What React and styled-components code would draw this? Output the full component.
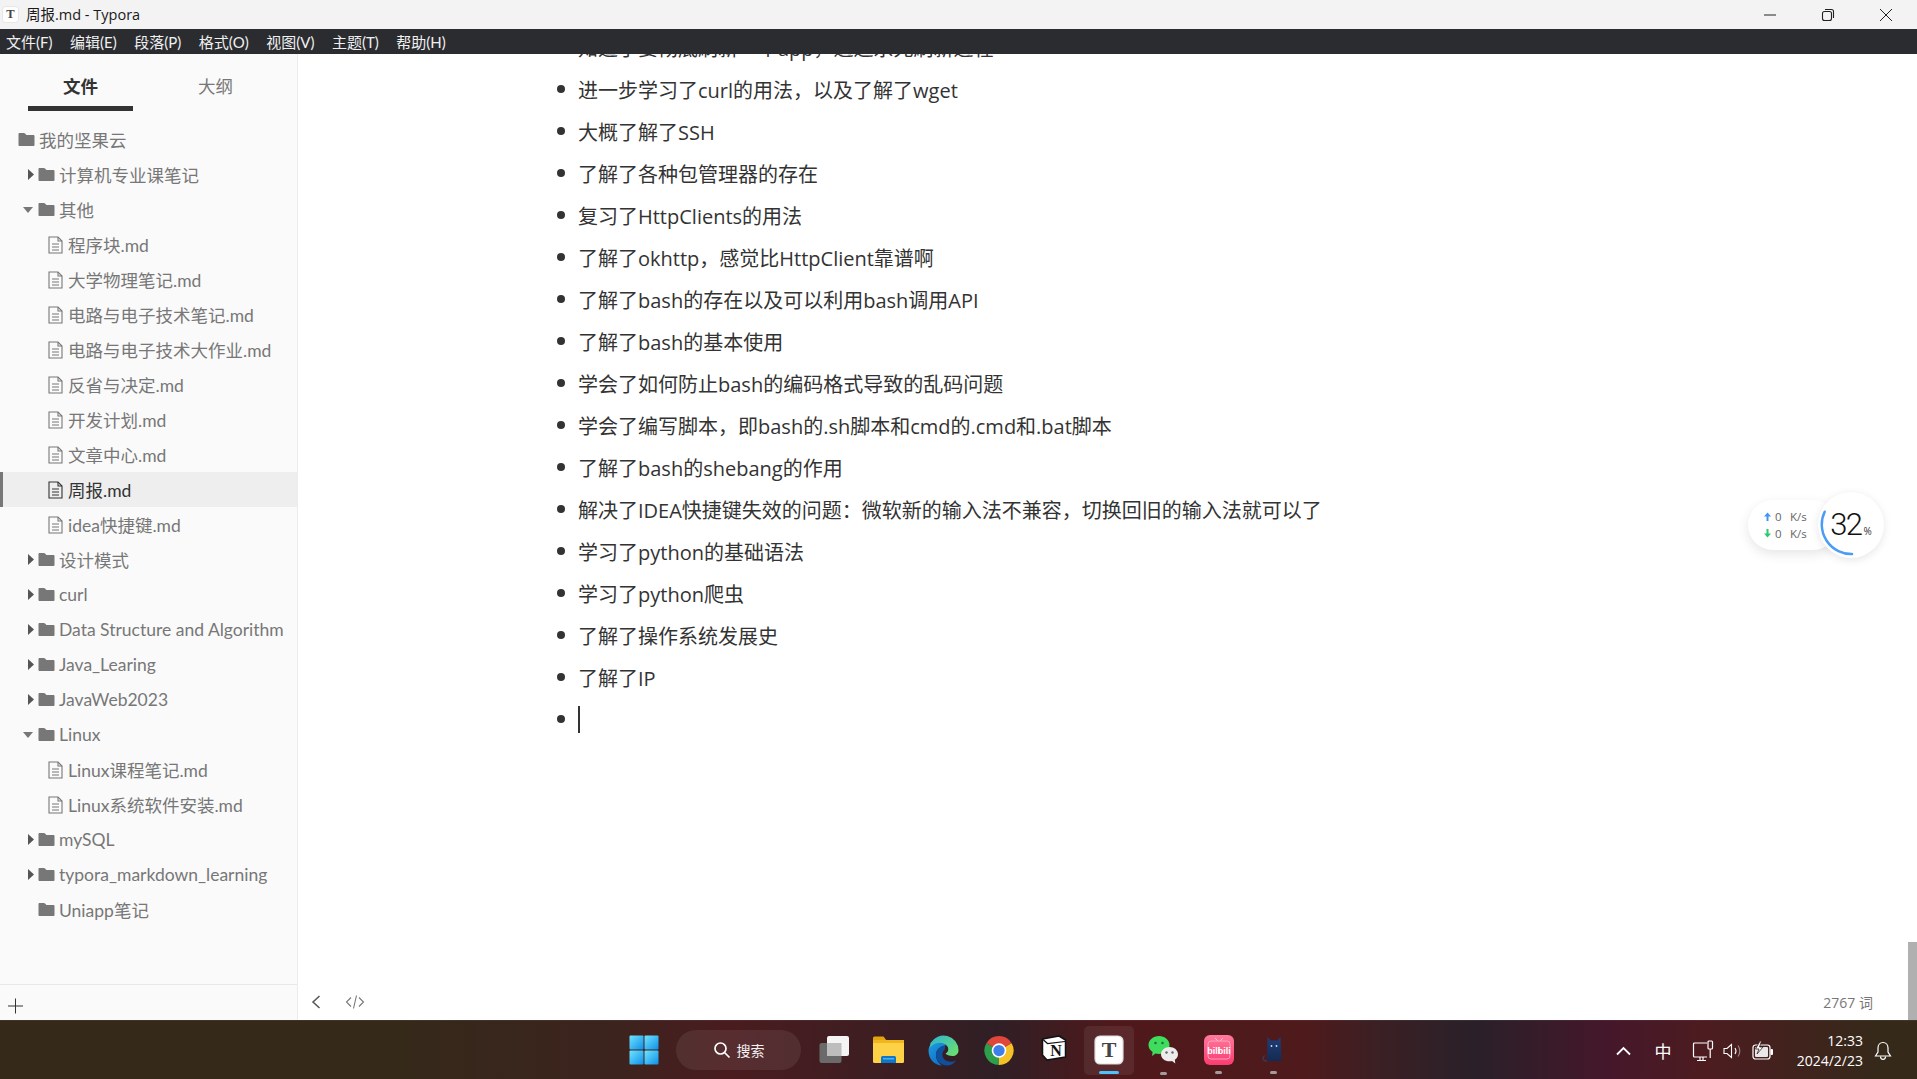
import React from 'react';
import styled, { createGlobalStyle } from 'styled-components';

const FONT = '"Open Sans", "Noto Sans CJK SC", sans-serif';
const UI_FONT = 'Lato, "Noto Sans CJK SC", sans-serif';

const GlobalStyle = createGlobalStyle`
  html, body {
    margin: 0;
    padding: 0;
    height: 100%;
    overflow: hidden;
    font-family: ${FONT};
  }
  * {
    box-sizing: border-box;
  }
`;

const Window = styled.div`
  display: flex;
  flex-direction: column;
  width: 1917px;
  height: 1079px;
  background-color: #fff;
`;

const TitleBar = styled.header`
  display: flex;
  align-items: center;
  flex: 0 0 29px;
  padding: 0 2px;
  background-color: #f3f3f3;
`;

const TitleText = styled.span`
  flex: 1;
  margin: 0 0 2px 7px;
  font-size: 14.5px;
  color: #1a1a1a;
`;

const WindowButton = styled.button`
  display: flex;
  align-items: center;
  justify-content: center;
  width: 58px;
  height: 29px;
  padding: 0;
  border: 0;
  background: transparent;
`;

const MenuBar = styled.nav`
  display: flex;
  align-items: center;
  flex: 0 0 25px;
  gap: 17.5px;
  padding-left: 6px;
  background-color: #2b2c30;
`;

const MenuItem = styled.span`
  font-family: ${UI_FONT};
  font-size: 15px;
  color: #f0f0f0;
`;

const Body = styled.div`
  display: flex;
  flex: 1;
  min-height: 0;
`;

const Sidebar = styled.aside`
  display: flex;
  flex-direction: column;
  flex: 0 0 298px;
  width: 298px;
  min-width: 0;
  overflow: hidden;
  background-color: #fafafa;
  border-right: 1px solid #ececec;
`;

const Tabs = styled.div`
  display: flex;
  flex: 0 0 68px;
  padding: 14px 0 0 28px;
  gap: 30px;
`;

const Tab = styled.div`
  width: 105px;
  height: 43px;
  padding-top: 4px;
  text-align: center;
  font-size: 17.5px;
  line-height: 28px;
  font-weight: ${(p) => (p.$active ? 700 : 400)};
  color: ${(p) => (p.$active ? '#333' : '#777')};
  border-bottom: 5px solid ${(p) => (p.$active ? '#333' : 'transparent')};
`;

const Tree = styled.div`
  flex: 1;
  overflow: hidden;
`;

const Row = styled.div`
  display: flex;
  align-items: center;
  height: 35px;
  padding-left: ${(p) => p.$pad}px;
  font-family: ${UI_FONT};
  font-size: 17.5px;
  white-space: nowrap;
  color: ${(p) => (p.$active ? '#333' : '#777')};
  background-color: ${(p) => (p.$active ? '#eeeeee' : 'transparent')};
  box-shadow: ${(p) => (p.$active ? 'inset 3px 0 0 #777' : 'none')};
`;

const ArrowSlot = styled.span`
  display: flex;
  justify-content: flex-end;
  width: 20px;
  padding-right: 4px;
`;

const RowLabel = styled.span`
  margin-left: ${(p) => p.$gap}px;
`;

const SidebarFooter = styled.div`
  display: flex;
  align-items: center;
  flex: 0 0 36px;
  padding: 6px 0 0 8px;
  border-top: 1px solid #e8e8e8;
`;

const Editor = styled.main`
  position: relative;
  display: flex;
  flex-direction: column;
  flex: 1;
  min-width: 0;
`;

const DocScroll = styled.div`
  flex: 1;
  min-height: 0;
  overflow: hidden;
`;

const List = styled.ul`
  margin: -28px 0 0;
  padding: 0 0 0 259px;
  list-style: none;
`;

const Item = styled.li`
  display: flex;
  align-items: center;
  height: 42px;
  font-size: 20px;
  color: #333;
  white-space: nowrap;

  &:before {
    content: '';
    flex: 0 0 8px;
    height: 8px;
    margin-right: 13px;
    border-radius: 50%;
    background-color: #333;
  }
`;

const Caret = styled.span`
  width: 1.5px;
  height: 27px;
  background-color: #333;
`;

const StatusBar = styled.footer`
  display: flex;
  align-items: center;
  flex: 0 0 36px;
  padding: 0 44px 0 13px;
`;

const StatusButton = styled.span`
  display: flex;
  margin-right: ${(p) => p.$gap}px;
`;

const WordCount = styled.span`
  margin-left: auto;
  font-size: 14px;
  color: #777;
`;

const ScrollThumb = styled.div`
  position: absolute;
  right: 0;
  bottom: 0;
  width: 9px;
  height: 78px;
  background-color: #b0b0b0;
`;

const SpeedWidget = styled.div`
  position: absolute;
  top: 438px;
  left: 1450px;
  display: flex;
  align-items: center;
`;

const SpeedPill = styled.div`
  display: flex;
  flex-direction: column;
  justify-content: center;
  gap: 3px;
  width: 90px;
  height: 50px;
  padding-left: 16px;
  border-radius: 25px;
  background-color: #fff;
  box-shadow: 0 4px 12px rgba(0, 0, 0, 0.1);
`;

const SpeedLine = styled.div`
  display: flex;
  align-items: center;
  height: 14px;
  font-size: 11.5px;
  color: #666;
`;

const SpeedValue = styled.span`
  width: 15px;
  margin-left: 4px;
`;

const UsageCircle = styled.div`
  position: relative;
  display: flex;
  align-items: center;
  justify-content: center;
  width: 66px;
  height: 66px;
  margin-left: -20px;
  border-radius: 50%;
  background-color: #fff;
  box-shadow: 0 2px 8px rgba(0, 0, 0, 0.1);
`;

const UsageArc = styled.svg`
  position: absolute;
  top: 0;
  left: 0;
`;

const UsageValue = styled.span`
  margin-bottom: 2px;
  font-family: Roboto, sans-serif;
  font-size: 31px;
  font-weight: 300;
  letter-spacing: -1.5px;
  color: #111;
`;

const UsageUnit = styled.span`
  align-self: flex-end;
  margin: 0 0 20px 2px;
  font-size: 10px;
  color: #333;
`;

const Taskbar = styled.div`
  display: grid;
  grid-template-columns: 1fr auto 1fr;
  flex: 0 0 59px;
  padding-top: 5px;
  border-top: 1px solid rgba(255, 255, 255, 0.06);
  background: linear-gradient(
    90deg,
    #35291a 0%,
    #35291a 21%,
    #3c231e 32%,
    #4a1c1f 38%,
    #3b1e22 47%,
    #2f1f25 52%,
    #4f191c 58%,
    #4f1a1c 68%,
    #3a2024 72%,
    #2a2029 77%,
    #45172a 84%,
    #4d1c20 89%,
    #35291a 98%
  );
`;

const TaskGroup = styled.div`
  grid-column: 2;
  display: flex;
`;

const TaskSlot = styled.div`
  display: flex;
  flex-direction: column;
  align-items: center;
  width: ${(p) => (p.$active ? '50px' : '55px')};
  height: 49px;
  margin: ${(p) => (p.$active ? '0 2px 0 3px' : '0')};
  padding-top: 9px;
  border-radius: 5px;
  background-color: ${(p) => (p.$active ? 'rgba(255, 255, 255, 0.07)' : 'transparent')};
`;

const TaskMark = styled.span`
  height: 3px;
  margin-top: 6px;
  border-radius: 2px;
  width: ${(p) => (p.$kind === 'active' ? '20px' : '7px')};
  background-color: ${(p) =>
    p.$kind === 'active' ? '#4cc2ff' : p.$kind === 'open' ? '#a89a9a' : 'transparent'};
`;

const SearchPill = styled.div`
  display: flex;
  align-items: center;
  justify-content: center;
  gap: 6px;
  width: 125px;
  height: 40px;
  margin: 4px 5px 0;
  border-radius: 20px;
  font-size: 14px;
  color: #f2f2f2;
  background-color: rgba(255, 255, 255, 0.08);
`;

const Tray = styled.div`
  grid-column: 3;
  justify-self: end;
  display: flex;
  align-items: center;
  height: 49px;
  padding-right: 24px;
  color: #fff;
`;

const TraySlot = styled.span`
  display: flex;
  align-items: center;
  justify-content: center;
  width: ${(p) => p.$w}px;
  font-size: ${(p) => (p.$text ? '17px' : 'inherit')};
`;

const Clock = styled.div`
  width: 70px;
  margin: 0 10px;
  text-align: right;
  font-size: 14px;
  line-height: 20px;
`;

const TyporaIcon = ({ size }) => (
  <svg width={size} height={size} viewBox="0 0 30 30">
    <rect x="1" y="1" width="28" height="28" rx="5" fill="#fff" stroke="#ddd" strokeWidth="1.200" />
    <text x="15" y="22" textAnchor="middle" fontFamily="Liberation Serif, serif" fontWeight="700" fontSize="22" fill="#444">T</text>
  </svg>
);

const MinimizeIcon = () => (
  <svg width="14" height="14" viewBox="0 0 14 14"><path d="M1 7h12" stroke="#222" strokeWidth="1" /></svg>
);

const RestoreIcon = () => (
  <svg width="14" height="14" viewBox="0 0 14 14" fill="none" stroke="#222" strokeWidth="1.100">
    <rect x="1.500" y="3.500" width="9" height="9" rx="2" />
    <path d="M4 1.500h6.500a2 2 0 0 1 2 2V10" />
  </svg>
);

const CloseIcon = () => (
  <svg width="14" height="14" viewBox="0 0 14 14"><path d="M1 1l12 12M13 1L1 13" stroke="#222" strokeWidth="1" /></svg>
);

const FolderIcon = () => (
  <svg width="17" height="15" viewBox="0 0 17 15">
    <path d="M1.500 1h4.200c.6 0 1 .2 1.400.6L8.400 3h7c.6 0 1.100.5 1.100 1.100v8.800c0 .6-.5 1.100-1.100 1.100H1.600C1 14 .5 13.500.5 12.900V2C.5 1.400 1 1 1.500 1z" fill="#777" />
  </svg>
);

const FileIcon = () => (
  <svg width="15" height="18" viewBox="0 0 15 18" fill="none" stroke="currentColor" strokeWidth="1.100">
    <path d="M1 1h9l4 4v12H1z" />
    <path d="M10 1v4h4M4 8h7M4 11h7M4 14h7" />
  </svg>
);

const Arrow = ({ open }) =>
  open ? (
    <svg width="11" height="6" viewBox="0 0 11 6"><path d="M0 0h10L5 6z" fill="#777" /></svg>
  ) : (
    <svg width="6" height="11" viewBox="0 0 6 11"><path d="M0 0l6 5.500L0 11z" fill="#555" /></svg>
  );

const PlusIcon = () => (
  <svg width="16" height="16" viewBox="0 0 16 16"><path d="M0 8h15M7.500 .5v15" stroke="#333" strokeWidth="1" /></svg>
);

const BackIcon = () => (
  <svg width="10" height="16" viewBox="0 0 10 16" fill="none"><path d="M8.500 2L2 8l6.500 6" stroke="#555" strokeWidth="1.500" /></svg>
);

const CodeIcon = () => (
  <svg width="20" height="14" viewBox="0 0 20 14" fill="none" stroke="#777" strokeWidth="1.100">
    <path d="M6 2.500L1.500 7 6 11.500M14 2.500L18.500 7 14 11.500M11.500 .5L8.500 13.500" />
  </svg>
);

const ArrowUp = ({ color }) => (
  <svg width="7" height="9" viewBox="0 0 7 9"><path d="M3.500 .5L7 4.500H4.500V9h-2V4.500H0z" fill={color} /></svg>
);

const ArrowDown = ({ color }) => (
  <svg width="7" height="9" viewBox="0 0 7 9"><path d="M3.500 8.500L7 4.500H4.500V0h-2v4.500H0z" fill={color} /></svg>
);

const WindowsLogo = () => (
  <svg width="30" height="30" viewBox="0 0 30 30">
    <defs>
      <linearGradient id="winBlue" x1="0" y1="0" x2="1" y2="1">
        <stop offset="0" stopColor="#6fe4ff" />
        <stop offset="1" stopColor="#0f8fe8" />
      </linearGradient>
    </defs>
    <rect x="0.500" y="0.500" width="14" height="14" rx="1" fill="url(#winBlue)" />
    <rect x="15.500" y="0.500" width="14" height="14" rx="1" fill="url(#winBlue)" />
    <rect x="0.500" y="15.500" width="14" height="14" rx="1" fill="url(#winBlue)" />
    <rect x="15.500" y="15.500" width="14" height="14" rx="1" fill="url(#winBlue)" />
  </svg>
);

const SearchIcon = () => (
  <svg width="18" height="18" viewBox="0 0 18 18" fill="none" stroke="#fff" strokeWidth="1.700">
    <circle cx="7.500" cy="7.500" r="5.500" />
    <path d="M11.500 11.500L16.500 16.500" />
  </svg>
);

const TaskViewIcon = () => (
  <svg width="30" height="30" viewBox="0 0 30 30">
    <rect x="0.500" y="8" width="22" height="20" rx="2" fill="#6a6a6a" />
    <rect x="8" y="1" width="22" height="20" rx="2" fill="#f4f4f4" />
    <rect x="8" y="8" width="14.500" height="13" fill="#bdbdbd" />
  </svg>
);

const ExplorerIcon = () => (
  <svg width="31" height="30" viewBox="0 0 31 30">
    <path d="M0 3a1.500 1.500 0 0 1 1.500-1.500h9l3 4H0z" fill="#e2a40e" />
    <rect x="0" y="5" width="31" height="23" rx="1.500" fill="#fdd247" />
    <rect x="0" y="5" width="31" height="3" fill="#f1b51f" />
    <path d="M8 28v-5.500A1.500 1.500 0 0 1 9.500 21h12a1.500 1.500 0 0 1 1.500 1.500V28z" fill="#0f77c8" />
    <rect x="10" y="23" width="11" height="1.500" fill="#52b0ea" />
  </svg>
);

const EdgeIcon = () => (
  <svg width="31" height="31" viewBox="0 0 31 31">
    <defs>
      <linearGradient id="edgeBlue" x1="0" y1="0" x2="0.600" y2="1">
        <stop offset="0" stopColor="#1fa0e0" />
        <stop offset="1" stopColor="#1070c8" />
      </linearGradient>
      <linearGradient id="edgeGreen" x1="0" y1="0" x2="1" y2="0.800">
        <stop offset="0" stopColor="#2bb0d8" />
        <stop offset="1" stopColor="#6be070" />
      </linearGradient>
    </defs>
    <path d="M15.500 5C8 5 .5 9 .5 15.500.5 24 6.500 30.500 14 30.500c-3-2-6-5.500-6-10.500 0-5 3.500-8.500 9.500-9.500z" fill="url(#edgeBlue)" />
    <path d="M2.500 8A15 15 0 0 1 30.500 15.500c0 3.500-2.800 5.500-6 5.500-3.300 0-6-1-7-2.500 2.800-1.500 3.500-4.500 2-7C17.500 8 11.500 6.800 7.500 8.500 5.500 9.300 3.500 11 1.500 13z" fill="url(#edgeGreen)" />
    <path d="M17.500 10.500C12 10.500 8 15 8 20c0 6 5.500 10.500 11 10.500 3.800 0 7-2 9-5-4 2-9.500 1.500-12-1.500-2.500-3-2-7 .5-9z" fill="#0e4f9e" />
  </svg>
);

const ChromeIcon = () => (
  <svg width="32" height="32" viewBox="0 0 32 32">
    <path d="M16 16L3 8.500A15 15 0 0 1 29 8.500z" fill="#e0463a" />
    <path d="M16 16L29 8.500A15 15 0 0 1 16 31z" fill="#f6c126" />
    <path d="M16 16L16 31A15 15 0 0 1 3 8.500z" fill="#2f9e4a" />
    <circle cx="16" cy="16" r="7.500" fill="#fff" />
    <circle cx="16" cy="16" r="5.800" fill="#3f7fe8" />
  </svg>
);

const NotionIcon = () => (
  <svg width="26" height="26" viewBox="0 0 26 26">
    <path d="M1.500 4L18 1l6.500 4v17L6 25l-4.500-5z" fill="#fff" stroke="#111" strokeWidth="1.500" strokeLinejoin="round" />
    <path d="M2 4.500l4.500 4L24 6.500" fill="none" stroke="#111" strokeWidth="1.200" />
    <text x="15" y="21" textAnchor="middle" fontFamily="Liberation Serif, serif" fontWeight="700" fontSize="16" fill="#111">N</text>
  </svg>
);

const WechatIcon = () => (
  <svg width="31" height="31" viewBox="0 0 31 31">
    <path d="M11 1c5.800 0 10.500 4 10.500 9s-4.700 9-10.500 9c-1.300 0-2.500-.2-3.600-.5L4 21l.6-4C2 15.300.5 12.800.5 10 .5 5 5.200 1 11 1z" fill="#3fdc5e" />
    <circle cx="7.500" cy="8" r="1.300" fill="#1a7a34" />
    <circle cx="14.500" cy="8" r="1.300" fill="#1a7a34" />
    <path d="M21.500 12c4.700 0 8.500 3.200 8.500 7.200 0 2.300-1.300 4.300-3.200 5.600l.5 3.700-3.300-2.500c-.8.200-1.600.3-2.500.3-4.700 0-8.500-3.200-8.500-7.100S16.800 12 21.500 12z" fill="#ececec" />
    <circle cx="18.500" cy="17.500" r="1.200" fill="#666" />
    <circle cx="24.500" cy="17.500" r="1.200" fill="#666" />
  </svg>
);

const BilibiliIcon = () => (
  <svg width="30" height="30" viewBox="0 0 30 30">
    <defs>
      <linearGradient id="biliPink" x1="0" y1="0" x2="0" y2="1">
        <stop offset="0" stopColor="#ff7a9c" />
        <stop offset="1" stopColor="#fb3b72" />
      </linearGradient>
    </defs>
    <rect width="30" height="30" rx="6" fill="url(#biliPink)" />
    <path d="M11 3l3 3M19 3l-3 3" stroke="#ffc2d2" strokeWidth="1" />
    <rect x="4" y="6" width="22" height="18" rx="3" fill="none" stroke="#ffa3bb" strokeWidth="1" />
    <text x="9.800" y="19" textAnchor="middle" fontFamily="Liberation Sans, sans-serif" fontWeight="700" fontSize="9" fill="#fff">bili</text>
    <text x="20.300" y="19" textAnchor="middle" fontFamily="Liberation Sans, sans-serif" fontWeight="700" fontSize="9" fill="#fff">bili</text>
  </svg>
);

const CatIcon = () => (
  <svg width="30" height="30" viewBox="0 0 30 30">
    <defs>
      <linearGradient id="catNavy" x1="0" y1="0" x2="0" y2="1">
        <stop offset="0" stopColor="#1f3f78" />
        <stop offset="1" stopColor="#142a52" />
      </linearGradient>
    </defs>
    <path d="M8.500 2l3 3.500h7L21.500 2l1 24H8z" fill="url(#catNavy)" />
    <path d="M8 26c-2 0-4 -.5-4-2.500 0-1.500 1-2 1.500-3" fill="none" stroke="#3a3f55" strokeWidth="1.200" />
    <circle cx="12.500" cy="11" r=".9" fill="#cfe0ff" />
    <circle cx="17.500" cy="11" r=".9" fill="#cfe0ff" />
  </svg>
);

const ChevronUpIcon = () => (
  <svg width="15" height="10" viewBox="0 0 15 10" fill="none"><path d="M1 8.500L7.500 2 14 8.500" stroke="#fff" strokeWidth="1.800" /></svg>
);

const MonitorIcon = () => (
  <svg width="22" height="22" viewBox="0 0 22 22" fill="none" stroke="#fff" strokeWidth="1.200">
    <path d="M15 3H2.500a1 1 0 0 0-1 1v12a1 1 0 0 0 1 1H15" />
    <path d="M8 17v3M5 20.500h9M11 17v3" />
    <rect x="16" y="1" width="4.500" height="8" rx="1" />
    <path d="M18.200 9v9" />
  </svg>
);

const VolumeIcon = () => (
  <svg width="20" height="18" viewBox="0 0 20 18" fill="none" stroke="#fff" strokeWidth="1.100">
    <path d="M1 6.500h3L8.500 2.500v13L4 11.500H1z" />
    <path d="M12 6c1.200 1.800 1.200 4.200 0 6" />
    <path d="M15 3.500c2.200 3.300 2.200 7.700 0 11" stroke="#9a8a8a" />
  </svg>
);

const BatteryIcon = () => (
  <svg width="22" height="20" viewBox="0 0 22 20">
    <rect x="1" y="4" width="17" height="14" rx="2.500" fill="none" stroke="#fff" strokeWidth="1.200" />
    <rect x="3" y="6" width="13" height="10" rx="1" fill="#e8e8e8" />
    <rect x="18.500" y="8" width="2.500" height="6" rx="1" fill="#fff" />
    <path d="M8 0L3.500 8h3.500L5 13l6-7H7.500L9.500 0z" fill="#fff" stroke="#3a2222" strokeWidth="0.800" />
  </svg>
);

const BellIcon = () => (
  <svg width="18" height="20" viewBox="0 0 18 20" fill="none" stroke="#fff" strokeWidth="1.200">
    <path d="M9 1.500c-3 0-5 2.300-5 5.500v4L1.500 15h15L14 11V7c0-3.200-2-5.500-5-5.500z" />
    <path d="M6.500 15.500c0 1.800 1 2.800 2.500 2.800s2.500-1 2.500-2.800" />
  </svg>
);

const menuItems = ['文件(F)', '编辑(E)', '段落(P)', '格式(O)', '视图(V)', '主题(T)', '帮助(H)'];

const treeRows = [
  { type: 'root', name: '我的坚果云' },
  { type: 'folder', name: '计算机专业课笔记' },
  { type: 'folder', name: '其他', open: true },
  { type: 'file', name: '程序块.md' },
  { type: 'file', name: '大学物理笔记.md' },
  { type: 'file', name: '电路与电子技术笔记.md' },
  { type: 'file', name: '电路与电子技术大作业.md' },
  { type: 'file', name: '反省与决定.md' },
  { type: 'file', name: '开发计划.md' },
  { type: 'file', name: '文章中心.md' },
  { type: 'file', name: '周报.md', active: true },
  { type: 'file', name: 'idea快捷键.md' },
  { type: 'folder', name: '设计模式' },
  { type: 'folder', name: 'curl' },
  { type: 'folder', name: 'Data Structure and Algorithm' },
  { type: 'folder', name: 'Java_Learing' },
  { type: 'folder', name: 'JavaWeb2023' },
  { type: 'folder', name: 'Linux', open: true },
  { type: 'file', name: 'Linux课程笔记.md' },
  { type: 'file', name: 'Linux系统软件安装.md' },
  { type: 'folder', name: 'mySQL' },
  { type: 'folder', name: 'typora_markdown_learning' },
  { type: 'folder', name: 'Uniapp笔记', leaf: true },
];

const notes = [
  '知道了要彻底刷新一个app，通过杀死刷新进程',
  '进一步学习了curl的用法，以及了解了wget',
  '大概了解了SSH',
  '了解了各种包管理器的存在',
  '复习了HttpClients的用法',
  '了解了okhttp，感觉比HttpClient靠谱啊',
  '了解了bash的存在以及可以利用bash调用API',
  '了解了bash的基本使用',
  '学会了如何防止bash的编码格式导致的乱码问题',
  '学会了编写脚本，即bash的.sh脚本和cmd的.cmd和.bat脚本',
  '了解了bash的shebang的作用',
  '解决了IDEA快捷键失效的问题：微软新的输入法不兼容，切换回旧的输入法就可以了',
  '学习了python的基础语法',
  '学习了python爬虫',
  '了解了操作系统发展史',
  '了解了IP',
];

const TreeRow = ({ row }) => {
  if (row.type === 'file') {
    return (
      <Row $pad={48} $active={row.active}>
        <FileIcon />
        <RowLabel $gap={5}>{row.name}</RowLabel>
      </Row>
    );
  }
  if (row.type === 'root') {
    return (
      <Row $pad={18}>
        <FolderIcon />
        <RowLabel $gap={4}>{row.name}</RowLabel>
      </Row>
    );
  }
  return (
    <Row $pad={18}>
      <ArrowSlot>{!row.leaf && <Arrow open={row.open} />}</ArrowSlot>
      <FolderIcon />
      <RowLabel $gap={4}>{row.name}</RowLabel>
    </Row>
  );
};

const App = () => (
  <Window>
    <GlobalStyle />
    <TitleBar>
      <TyporaIcon size={17} />
      <TitleText>周报.md - Typora</TitleText>
      <WindowButton><MinimizeIcon /></WindowButton>
      <WindowButton><RestoreIcon /></WindowButton>
      <WindowButton><CloseIcon /></WindowButton>
    </TitleBar>
    <MenuBar>
      {menuItems.map((item) => <MenuItem key={item}>{item}</MenuItem>)}
    </MenuBar>
    <Body>
      <Sidebar>
        <Tabs>
          <Tab $active>文件</Tab>
          <Tab>大纲</Tab>
        </Tabs>
        <Tree>
          {treeRows.map((row) => <TreeRow key={row.name} row={row} />)}
        </Tree>
        <SidebarFooter><PlusIcon /></SidebarFooter>
      </Sidebar>
      <Editor>
        <DocScroll>
          <List>
            {notes.map((note) => <Item key={note}>{note}</Item>)}
            <Item><Caret /></Item>
          </List>
        </DocScroll>
        <StatusBar>
          <StatusButton $gap={24}><BackIcon /></StatusButton>
          <StatusButton $gap={0}><CodeIcon /></StatusButton>
          <WordCount>2767 词</WordCount>
        </StatusBar>
        <ScrollThumb />
        <SpeedWidget>
          <SpeedPill>
            <SpeedLine><ArrowUp color="#3f95f5" /><SpeedValue>0</SpeedValue>K/s</SpeedLine>
            <SpeedLine><ArrowDown color="#2fc76a" /><SpeedValue>0</SpeedValue>K/s</SpeedLine>
          </SpeedPill>
          <UsageCircle>
            <UsageArc width="66" height="66" viewBox="0 0 66 66" fill="none">
              <path d="M6.700 19.700A29.500 29.500 0 0 0 34 62" stroke="#4a9df5" strokeWidth="2.500" strokeLinecap="round" />
            </UsageArc>
            <UsageValue>32</UsageValue>
            <UsageUnit>%</UsageUnit>
          </UsageCircle>
        </SpeedWidget>
      </Editor>
    </Body>
    <Taskbar>
      <TaskGroup>
        <TaskSlot><WindowsLogo /><TaskMark /></TaskSlot>
        <SearchPill><SearchIcon />搜索</SearchPill>
        <TaskSlot><TaskViewIcon /><TaskMark /></TaskSlot>
        <TaskSlot><ExplorerIcon /><TaskMark /></TaskSlot>
        <TaskSlot><EdgeIcon /><TaskMark /></TaskSlot>
        <TaskSlot><ChromeIcon /><TaskMark /></TaskSlot>
        <TaskSlot><NotionIcon /><TaskMark /></TaskSlot>
        <TaskSlot $active><TyporaIcon size={30} /><TaskMark $kind="active" /></TaskSlot>
        <TaskSlot><WechatIcon /><TaskMark $kind="open" /></TaskSlot>
        <TaskSlot><BilibiliIcon /><TaskMark $kind="open" /></TaskSlot>
        <TaskSlot><CatIcon /><TaskMark $kind="open" /></TaskSlot>
      </TaskGroup>
      <Tray>
        <TraySlot $w={39}><ChevronUpIcon /></TraySlot>
        <TraySlot $w={40} $text>中</TraySlot>
        <TraySlot $w={40}><MonitorIcon /></TraySlot>
        <TraySlot $w={20}><VolumeIcon /></TraySlot>
        <TraySlot $w={40}><BatteryIcon /></TraySlot>
        <Clock>12:33<br />2024/2/23</Clock>
        <TraySlot $w={20}><BellIcon /></TraySlot>
      </Tray>
    </Taskbar>
  </Window>
);

export default App;
